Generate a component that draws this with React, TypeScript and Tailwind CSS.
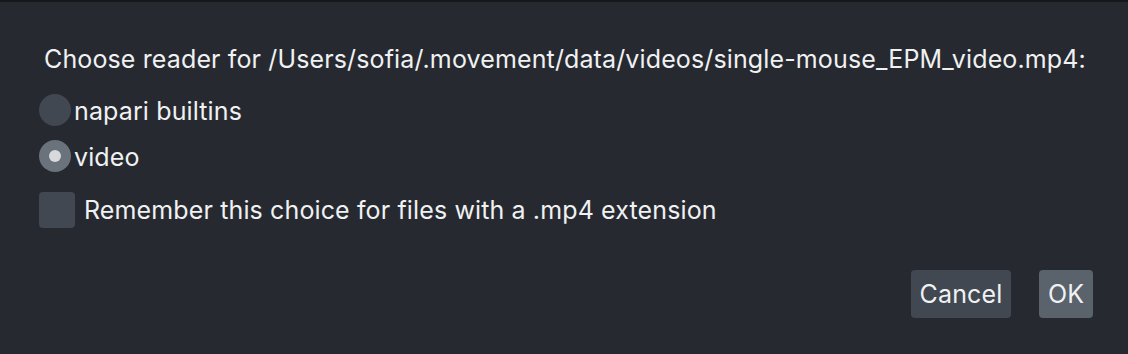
import { useState } from 'react'

// Radio button in napari's dark theme
function Radio({ checked, label, onSelect }: { checked: boolean; label: string; onSelect: () => void }) {
  return (
    <label className="flex items-center h-8 cursor-pointer" onClick={onSelect}>
      <span
        className={`flex items-center justify-center w-8 h-8 rounded-full ${checked ? 'bg-[#6a727c]' : 'bg-[#414851]'}`}
      >
        {checked && <span className="w-3 h-3 rounded-full bg-[#d8d9db]" />}
      </span>
      <span className="ml-[3px] mt-[2px] leading-[28px]">{label}</span>
    </label>
  )
}

export default function App() {
  const [reader, setReader] = useState('video')
  const [remember, setRemember] = useState(false)

  return (
    <div
      className="w-[1128px] h-[354px] bg-[#262930] border-t-2 border-[#17181c] text-[#f0f1f2] text-[25px] tracking-[0.13px] flex flex-col pt-[43px] pl-[39px] pr-[35px]"
      style={{ fontFamily: 'Inter, "Noto Sans", sans-serif' }}
    >
      <div className="leading-[28px] pl-[5px]">
        Choose reader for /Users/sofia/.movement/data/videos/single-mouse_EPM_video.mp4:
      </div>

      <div className="mt-[21px] flex flex-col gap-[14px]">
        <Radio checked={reader === 'napari'} label="napari builtins" onSelect={() => setReader('napari')} />
        <Radio checked={reader === 'video'} label="video" onSelect={() => setReader('video')} />
      </div>

      <label className="mt-[20px] flex items-center h-9 cursor-pointer" onClick={() => setRemember(!remember)}>
        <span className={`w-9 h-9 rounded-[4px] ${remember ? 'bg-[#6a727c]' : 'bg-[#414851]'}`} />
        <span className="ml-[9px] leading-[28px]">Remember this choice for files with a .mp4 extension</span>
      </label>

      <div className="mt-[42px] flex justify-end gap-[28px]">
        <button className="h-12 w-[100px] flex items-center justify-center rounded-[4px] bg-[#414851] leading-[28px]">Cancel</button>
        <button className="h-12 w-[54px] flex items-center justify-center rounded-[4px] bg-[#5a626c] leading-[28px]">OK</button>
      </div>
    </div>
  )
}
